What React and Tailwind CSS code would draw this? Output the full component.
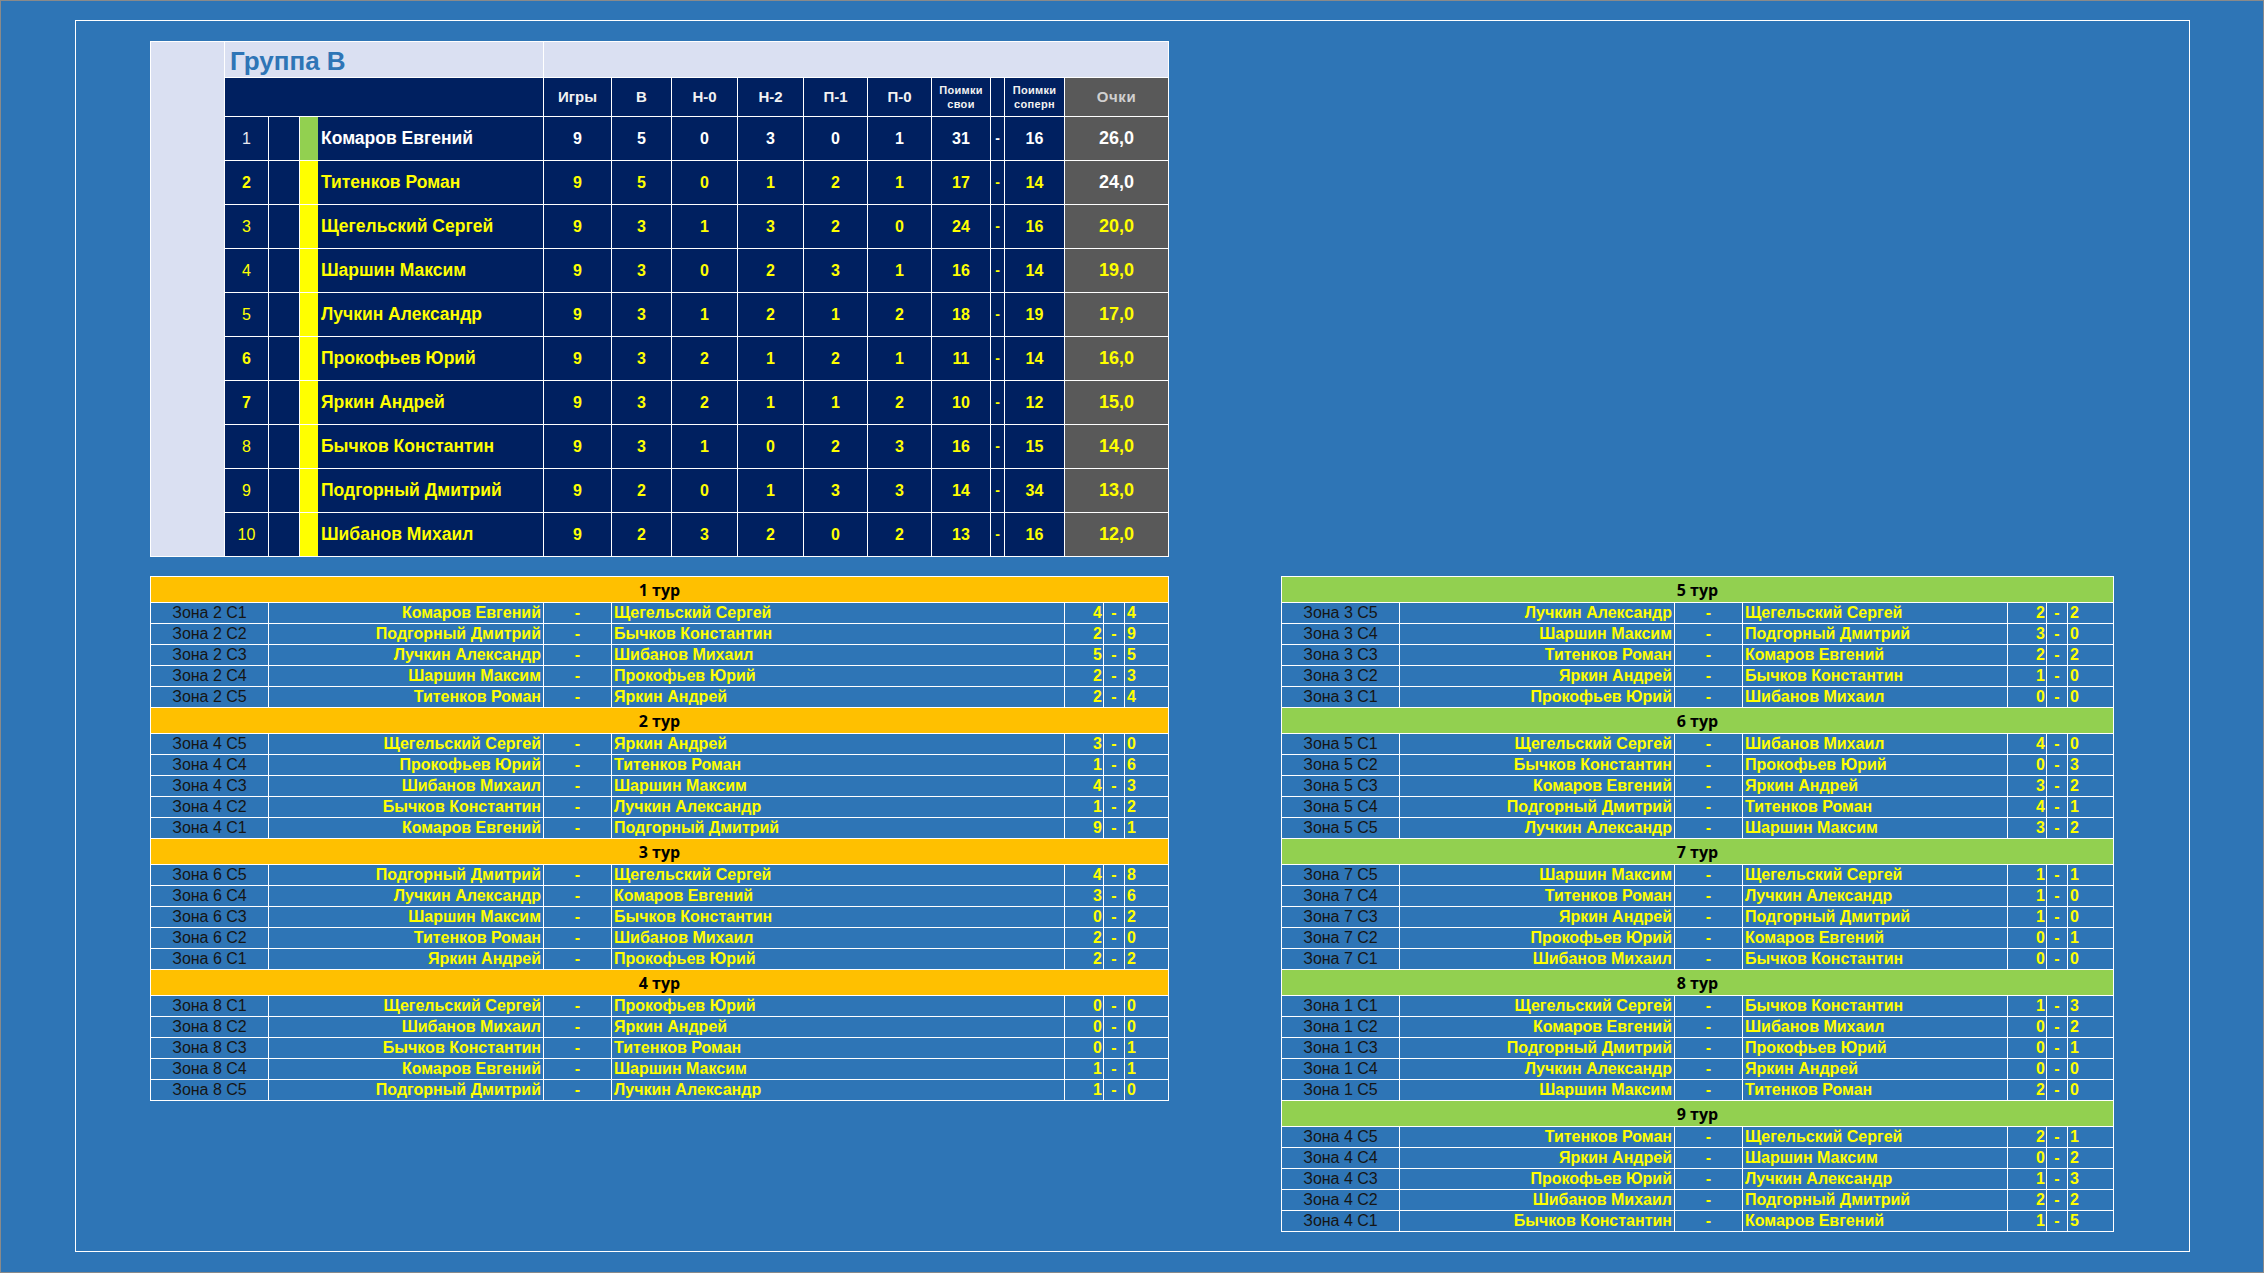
import React from "react";

const standings = [
  { n: "1", name: "Комаров Евгений", v: ["9", "5", "0", "3", "0", "1"], own: "31", opp: "16", pts: "26,0", bar: "bg-[#92D050]", txt: "text-white", rank: "text-[#e8e8f0] font-normal", pc: "text-white" },
  { n: "2", name: "Титенков Роман", v: ["9", "5", "0", "1", "2", "1"], own: "17", opp: "14", pts: "24,0", bar: "bg-[#FFFF00]", txt: "text-[#FFFF00]", rank: "text-[#FFFF00] font-bold", pc: "text-white" },
  { n: "3", name: "Щегельский Сергей", v: ["9", "3", "1", "3", "2", "0"], own: "24", opp: "16", pts: "20,0", bar: "bg-[#FFFF00]", txt: "text-[#FFFF00]", rank: "text-[#FFFF00] font-normal", pc: "text-[#FFFF00]" },
  { n: "4", name: "Шаршин Максим", v: ["9", "3", "0", "2", "3", "1"], own: "16", opp: "14", pts: "19,0", bar: "bg-[#FFFF00]", txt: "text-[#FFFF00]", rank: "text-[#FFFF00] font-normal", pc: "text-[#FFFF00]" },
  { n: "5", name: "Лучкин Александр", v: ["9", "3", "1", "2", "1", "2"], own: "18", opp: "19", pts: "17,0", bar: "bg-[#FFFF00]", txt: "text-[#FFFF00]", rank: "text-[#FFFF00] font-normal", pc: "text-[#FFFF00]" },
  { n: "6", name: "Прокофьев Юрий", v: ["9", "3", "2", "1", "2", "1"], own: "11", opp: "14", pts: "16,0", bar: "bg-[#FFFF00]", txt: "text-[#FFFF00]", rank: "text-[#FFFF00] font-bold", pc: "text-[#FFFF00]" },
  { n: "7", name: "Яркин Андрей", v: ["9", "3", "2", "1", "1", "2"], own: "10", opp: "12", pts: "15,0", bar: "bg-[#FFFF00]", txt: "text-[#FFFF00]", rank: "text-[#FFFF00] font-bold", pc: "text-[#FFFF00]" },
  { n: "8", name: "Бычков Константин", v: ["9", "3", "1", "0", "2", "3"], own: "16", opp: "15", pts: "14,0", bar: "bg-[#FFFF00]", txt: "text-[#FFFF00]", rank: "text-[#FFFF00] font-normal", pc: "text-[#FFFF00]" },
  { n: "9", name: "Подгорный Дмитрий", v: ["9", "2", "0", "1", "3", "3"], own: "14", opp: "34", pts: "13,0", bar: "bg-[#FFFF00]", txt: "text-[#FFFF00]", rank: "text-[#FFFF00] font-normal", pc: "text-[#FFFF00]" },
  { n: "10", name: "Шибанов Михаил", v: ["9", "2", "3", "2", "0", "2"], own: "13", opp: "16", pts: "12,0", bar: "bg-[#FFFF00]", txt: "text-[#FFFF00]", rank: "text-[#FFFF00] font-normal", pc: "text-[#FFFF00]" },
];

const leftTours = [
  { title: "1 тур", games: [
    ["Зона 2 С1", "Комаров Евгений", "Щегельский Сергей", "4", "4"],
    ["Зона 2 С2", "Подгорный Дмитрий", "Бычков Константин", "2", "9"],
    ["Зона 2 С3", "Лучкин Александр", "Шибанов Михаил", "5", "5"],
    ["Зона 2 С4", "Шаршин Максим", "Прокофьев Юрий", "2", "3"],
    ["Зона 2 С5", "Титенков Роман", "Яркин Андрей", "2", "4"],
  ]},
  { title: "2 тур", games: [
    ["Зона 4 С5", "Щегельский Сергей", "Яркин Андрей", "3", "0"],
    ["Зона 4 С4", "Прокофьев Юрий", "Титенков Роман", "1", "6"],
    ["Зона 4 С3", "Шибанов Михаил", "Шаршин Максим", "4", "3"],
    ["Зона 4 С2", "Бычков Константин", "Лучкин Александр", "1", "2"],
    ["Зона 4 С1", "Комаров Евгений", "Подгорный Дмитрий", "9", "1"],
  ]},
  { title: "3 тур", games: [
    ["Зона 6 С5", "Подгорный Дмитрий", "Щегельский Сергей", "4", "8"],
    ["Зона 6 С4", "Лучкин Александр", "Комаров Евгений", "3", "6"],
    ["Зона 6 С3", "Шаршин Максим", "Бычков Константин", "0", "2"],
    ["Зона 6 С2", "Титенков Роман", "Шибанов Михаил", "2", "0"],
    ["Зона 6 С1", "Яркин Андрей", "Прокофьев Юрий", "2", "2"],
  ]},
  { title: "4 тур", games: [
    ["Зона 8 С1", "Щегельский Сергей", "Прокофьев Юрий", "0", "0"],
    ["Зона 8 С2", "Шибанов Михаил", "Яркин Андрей", "0", "0"],
    ["Зона 8 С3", "Бычков Константин", "Титенков Роман", "0", "1"],
    ["Зона 8 С4", "Комаров Евгений", "Шаршин Максим", "1", "1"],
    ["Зона 8 С5", "Подгорный Дмитрий", "Лучкин Александр", "1", "0"],
  ]},
];

const rightTours = [
  { title: "5 тур", games: [
    ["Зона 3 С5", "Лучкин Александр", "Щегельский Сергей", "2", "2"],
    ["Зона 3 С4", "Шаршин Максим", "Подгорный Дмитрий", "3", "0"],
    ["Зона 3 С3", "Титенков Роман", "Комаров Евгений", "2", "2"],
    ["Зона 3 С2", "Яркин Андрей", "Бычков Константин", "1", "0"],
    ["Зона 3 С1", "Прокофьев Юрий", "Шибанов Михаил", "0", "0"],
  ]},
  { title: "6 тур", games: [
    ["Зона 5 С1", "Щегельский Сергей", "Шибанов Михаил", "4", "0"],
    ["Зона 5 С2", "Бычков Константин", "Прокофьев Юрий", "0", "3"],
    ["Зона 5 С3", "Комаров Евгений", "Яркин Андрей", "3", "2"],
    ["Зона 5 С4", "Подгорный Дмитрий", "Титенков Роман", "4", "1"],
    ["Зона 5 С5", "Лучкин Александр", "Шаршин Максим", "3", "2"],
  ]},
  { title: "7 тур", games: [
    ["Зона 7 С5", "Шаршин Максим", "Щегельский Сергей", "1", "1"],
    ["Зона 7 С4", "Титенков Роман", "Лучкин Александр", "1", "0"],
    ["Зона 7 С3", "Яркин Андрей", "Подгорный Дмитрий", "1", "0"],
    ["Зона 7 С2", "Прокофьев Юрий", "Комаров Евгений", "0", "1"],
    ["Зона 7 С1", "Шибанов Михаил", "Бычков Константин", "0", "0"],
  ]},
  { title: "8 тур", games: [
    ["Зона 1 С1", "Щегельский Сергей", "Бычков Константин", "1", "3"],
    ["Зона 1 С2", "Комаров Евгений", "Шибанов Михаил", "0", "2"],
    ["Зона 1 С3", "Подгорный Дмитрий", "Прокофьев Юрий", "0", "1"],
    ["Зона 1 С4", "Лучкин Александр", "Яркин Андрей", "0", "0"],
    ["Зона 1 С5", "Шаршин Максим", "Титенков Роман", "2", "0"],
  ]},
  { title: "9 тур", games: [
    ["Зона 4 С5", "Титенков Роман", "Щегельский Сергей", "2", "1"],
    ["Зона 4 С4", "Яркин Андрей", "Шаршин Максим", "0", "2"],
    ["Зона 4 С3", "Прокофьев Юрий", "Лучкин Александр", "1", "3"],
    ["Зона 4 С2", "Шибанов Михаил", "Подгорный Дмитрий", "2", "2"],
    ["Зона 4 С1", "Бычков Константин", "Комаров Евгений", "1", "5"],
  ]},
];

function Standings() {
  const head = "bg-[#002060] text-[#f2f2f2] font-bold text-[15px] flex items-center justify-center";
  const small = "bg-[#002060] text-[#f2f2f2] font-bold text-[11px] leading-[14px] tracking-[0.3px] flex flex-col items-center justify-center";
  return (
    <div className="grid grid-cols-[73px_43px_30px_243px_67px_59px_65px_65px_63px_63px_58px_13px_59px_103px] grid-rows-[35px_38px_repeat(10,43px)] gap-px p-px bg-white w-[1019px]">
      <div className="row-span-12 bg-[#DAE0F2]"></div>
      <div className="col-span-3 bg-[#DAE0F2] flex items-end pl-[5px] pb-[1px]">
        <span className="text-[26px] leading-[30px] font-bold text-[#2E75B6]">Группа В</span>
      </div>
      <div className="col-span-10 bg-[#DAE0F2]"></div>

      <div className="col-span-3 bg-[#002060]"></div>
      <div className={head}>Игры</div>
      <div className={head}>В</div>
      <div className={head}>Н-0</div>
      <div className={head}>Н-2</div>
      <div className={head}>П-1</div>
      <div className={head}>П-0</div>
      <div className={small}><span>Поимки</span><span>свои</span></div>
      <div className="bg-[#002060]"></div>
      <div className={small}><span>Поимки</span><span>соперн</span></div>
      <div className="bg-[#595959] text-[#d0d0d0] font-bold text-[15px] tracking-[0.6px] flex items-center justify-center">Очки</div>

      {standings.map((r) => (
        <React.Fragment key={r.n}>
          <div className={`bg-[#002060] text-[16px] flex items-center justify-center ${r.rank}`}>{r.n}</div>
          <div className="bg-[#002060]"></div>
          <div className="bg-[#002060] flex">
            <div className={`w-[18px] ${r.bar}`}></div>
            <div className={`flex items-center pl-[3px] text-[17.5px] font-bold ${r.txt}`}>{r.name}</div>
          </div>
          {r.v.map((x, i) => (
            <div key={i} className={`bg-[#002060] flex items-center justify-center text-[16px] font-bold ${r.txt}`}>{x}</div>
          ))}
          <div className={`bg-[#002060] flex items-center justify-center text-[16px] font-bold ${r.txt}`}>{r.own}</div>
          <div className={`bg-[#002060] flex items-center justify-center text-[14px] font-bold ${r.txt}`}>-</div>
          <div className={`bg-[#002060] flex items-center justify-center text-[16px] font-bold ${r.txt}`}>{r.opp}</div>
          <div className={`bg-[#595959] flex items-center justify-center text-[18px] font-bold ${r.pc}`}>{r.pts}</div>
        </React.Fragment>
      ))}
    </div>
  );
}

function Matches({ tours, cols, width, headBg }) {
  const cell = "bg-[#2E75B6] h-[20px] leading-[20px] whitespace-nowrap overflow-hidden";
  const y = "text-[#FFFF00] font-bold text-[16px]";
  return (
    <div className={`grid ${cols} gap-px p-px bg-white ${width}`}>
      {tours.map((t) => (
        <React.Fragment key={t.title}>
          <div className={`col-span-7 h-[25px] ${headBg} flex items-center justify-center font-['Open_Sans',sans-serif] font-bold text-[16px] text-black`}>
            {t.title}
          </div>
          {t.games.map((g) => (
            <React.Fragment key={g[0] + g[1]}>
              <div className={`${cell} text-center text-[16px] text-[#151515]`}>{g[0]}</div>
              <div className={`${cell} ${y} text-right pr-[2px]`}>{g[1]}</div>
              <div className={`${cell} ${y} text-center`}>-</div>
              <div className={`${cell} ${y} text-left pl-[2px]`}>{g[2]}</div>
              <div className={`${cell} ${y} text-right pr-[1px]`}>{g[3]}</div>
              <div className={`${cell} ${y} text-center`}>-</div>
              <div className={`${cell} ${y} text-left pl-[2px]`}>{g[4]}</div>
            </React.Fragment>
          ))}
        </React.Fragment>
      ))}
    </div>
  );
}

export default function App() {
  return (
    <div className="w-[2266px] h-[1274px] bg-white font-['Liberation_Sans',Arial,sans-serif]">
      <div className="w-[2264px] h-[1273px] border border-[#8a8a8a] bg-[#2E75B6] pl-[74px] pt-[19px]">
        <div className="w-[2115px] h-[1232px] border border-white pl-[74px] pt-[20px]">
          <Standings />
          <div className="mt-[19px] flex items-start gap-[112px]">
            <Matches
              tours={leftTours}
              cols="grid-cols-[117px_274px_67px_452px_38px_20px_43px]"
              width="w-[1019px]"
              headBg="bg-[#FFC000]"
            />
            <Matches
              tours={rightTours}
              cols="grid-cols-[117px_274px_67px_264px_38px_20px_45px]"
              width="w-[833px]"
              headBg="bg-[#92D050]"
            />
          </div>
        </div>
      </div>
    </div>
  );
}
